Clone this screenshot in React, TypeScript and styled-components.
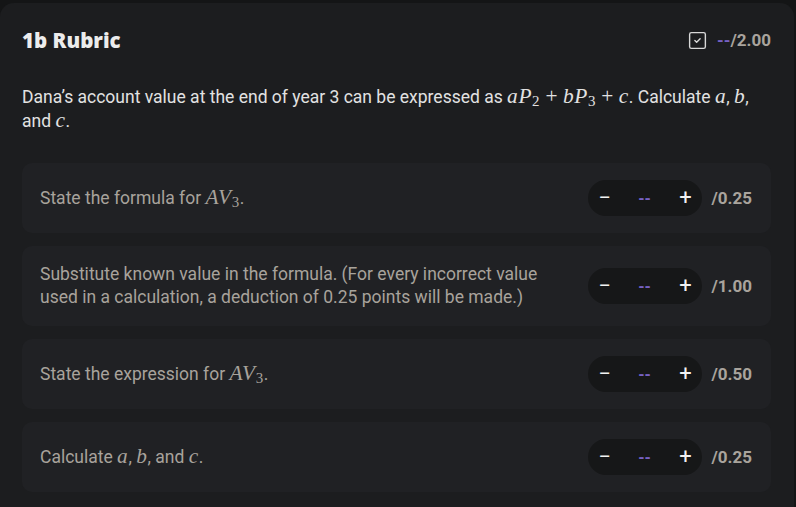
import React from "react";
import styled, { createGlobalStyle } from "styled-components";
import { SquareCheck } from "lucide-react";

const GlobalStyle = createGlobalStyle`
	html, body {
		margin: 0;
		padding: 0;
		background: #141516;
	}
	body {
		font-family: Roboto, "Liberation Sans", sans-serif;
	}
`;

const Page = styled.div`
	padding-top: 3px;
	width: 796px;
	height: 507px;
	overflow: hidden;
	box-sizing: border-box;
`;

const Card = styled.div`
	background: #1c1d1f;
	border-radius: 14px;
	width: 794px;
	min-height: 540px;
	box-sizing: border-box;
	padding: 22px 23px 40px 22px;
	display: flex;
	flex-direction: column;
	gap: 30px;
`;

const Header = styled.div`
	display: flex;
	align-items: center;
	justify-content: space-between;
	height: 30px;
`;

const Title = styled.h2`
	margin: 0;
	font-family: "Open Sans", "Noto Sans", sans-serif;
	font-weight: 800;
	font-size: 20.5px;
	color: #ececec;
`;

const TotalBox = styled.div`
	display: flex;
	align-items: center;
	gap: 9px;
`;

const Points = styled.span`
	font-weight: 700;
	font-size: 17px;
	color: #a9a49d;
`;

const Dash = styled.span`
	color: #7661c4;
`;

const Description = styled.p`
	margin: 0;
	font-size: 17.5px;
	line-height: 24px;
	color: #e2e2e2;
`;

const M = styled.span`
	font-family: "Liberation Serif", "DejaVu Serif", serif;
	font-style: italic;
	font-size: 1.22em;
	line-height: 18px;
	letter-spacing: 0.03em;
`;

const Sub = styled.sub`
	font-family: "Liberation Serif", "DejaVu Serif", serif;
	font-style: normal;
	font-size: 0.7em;
	vertical-align: -0.2em;
	line-height: 10px;
`;

const Op = styled.span`
	font-family: "Liberation Serif", "DejaVu Serif", serif;
	font-size: 1.22em;
	margin: 0 0.25em;
	line-height: 18px;
`;

const List = styled.div`
	display: flex;
	flex-direction: column;
	gap: 13px;
`;

const Item = styled.div`
	background: #202124;
	border-radius: 10px;
	min-height: 70px;
	box-sizing: border-box;
	padding: 17px 19px 17px 18px;
	display: flex;
	align-items: center;
	gap: 20px;
`;

const ItemText = styled.div`
	flex: 1;
	font-size: 17.5px;
	line-height: 23px;
	color: #a8a39c;
`;

const Controls = styled.div`
	display: flex;
	align-items: center;
	gap: 9px;
`;

const Stepper = styled.div`
	display: grid;
	grid-template-columns: 32px 48px 34px;
	height: 36px;
	align-items: center;
	background: #161718;
	border-radius: 18px;
`;

const StepButton = styled.button`
	background: none;
	border: none;
	padding: 0;
	color: #f2f2f2;
	font-family: Roboto, sans-serif;
	font-size: 22px;
	line-height: 1;
	display: flex;
	align-items: center;
	justify-content: center;
`;

const Value = styled.span`
	text-align: center;
	color: #7661c4;
	font-weight: 700;
	font-size: 16px;
`;

function Var({ v, sub }: { v: string; sub?: string }) {
	return (
		<M>
			{v}
			{sub && <Sub>{sub}</Sub>}
		</M>
	);
}

type Row = { text: React.ReactNode; max: string };

const rows: Row[] = [
	{
		text: (
			<>
				State the formula for <Var v="AV" sub="3" />.
			</>
		),
		max: "0.25",
	},
	{
		text: (
			<>
				Substitute known value in the formula. (For every incorrect value
				used in a calculation, a deduction of 0.25 points will be made.)
			</>
		),
		max: "1.00",
	},
	{
		text: (
			<>
				State the expression for <Var v="AV" sub="3" />.
			</>
		),
		max: "0.50",
	},
	{
		text: (
			<>
				Calculate <Var v="a" />, <Var v="b" />, and <Var v="c" />.
			</>
		),
		max: "0.25",
	},
];

export default function App() {
	return (
		<Page>
			<GlobalStyle />
			<Card>
				<Header>
					<Title>1b Rubric</Title>
					<TotalBox>
						<SquareCheck size={21} strokeWidth={1.6} color="#d8d8d8" />
						<Points>
							<Dash>--</Dash>/2.00
						</Points>
					</TotalBox>
				</Header>
				<Description>
					Dana’s account value at the end of year 3 can be expressed as{" "}
					<Var v="aP" sub="2" />
					<Op>+</Op>
					<Var v="bP" sub="3" />
					<Op>+</Op>
					<Var v="c" />. Calculate <Var v="a" />, <Var v="b" />, and{" "}
					<Var v="c" />.
				</Description>
				<List>
					{rows.map((r, i) => (
						<Item key={i}>
							<ItemText>{r.text}</ItemText>
							<Controls>
								<Stepper>
									<StepButton>−</StepButton>
									<Value>--</Value>
									<StepButton>+</StepButton>
								</Stepper>
								<Points>/{r.max}</Points>
							</Controls>
						</Item>
					))}
				</List>
			</Card>
		</Page>
	);
}
